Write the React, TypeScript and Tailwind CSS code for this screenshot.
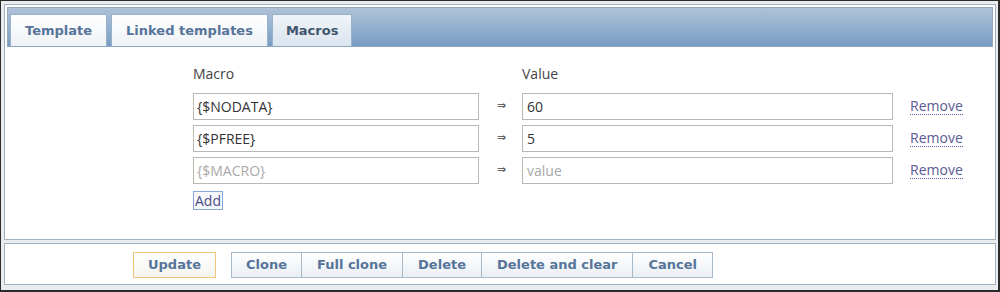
const macros = [
  { name: "{$NODATA}", value: "60" },
  { name: "{$PFREE}", value: "5" },
  { name: "", value: "" },
];

const tabs = ["Template", "Linked templates", "Macros"];
const buttons = ["Clone", "Full clone", "Delete", "Delete and clear", "Cancel"];

export default function App() {
  return (
    <div className="flex h-[292px] w-[1000px] flex-col border-t border-l border-r-2 border-b-2 border-[#2b2b2b] bg-[#e9edf0] pt-[3px] pl-[3px] pr-[2px] pb-[5px] font-['DejaVu_Sans',sans-serif] text-[13px]">
      {/* form panel */}
      <div className="flex h-[236px] flex-col border border-[#9fb0c1] bg-white">
        <div className="m-[2px] mb-0 flex h-[40px] items-end gap-[4px] border border-[#8fa8c2] bg-gradient-to-b from-[#aec2d8] via-[#95b1ce] to-[#779cc3] pl-[2px]">
          {tabs.map((t) => (
            <div
              key={t}
              className={
                t === "Macros"
                  ? "flex h-[32px] items-center border border-b-0 border-[#98b2cc] bg-gradient-to-b from-[#f0f4f8] to-[#dbe4ee] px-[13px] font-bold text-[#3f566e]"
                  : "flex h-[32px] items-center border border-b-0 border-[#98b2cc] bg-gradient-to-b from-[#ffffff] to-[#eef2f6] px-[14px] font-bold text-[#56749a]"
              }
            >
              {t}
            </div>
          ))}
        </div>
        <div className="flex flex-col pt-[19px] pl-[188px] font-['Open_Sans',sans-serif] text-[14px]">
          <div className="flex leading-[16px] text-[#444]">
            <div className="w-[329px]">Macro</div>
            <div>Value</div>
          </div>
          <div className="mt-[11px] flex flex-col gap-[5px]">
            {macros.map((m, i) => (
              <div key={i} className="flex h-[27px] items-center">
                <div
                  className={
                    m.name
                      ? "flex h-[27px] w-[286px] items-center border border-[#b9b9b1] px-[3px] text-[#333]"
                      : "flex h-[27px] w-[286px] items-center border border-[#b9b9b1] px-[3px] text-[#a9a9a9]"
                  }
                >
                  {m.name || "{$MACRO}"}
                </div>
                <div className="w-[43px] pl-[18px] font-['DejaVu_Sans',sans-serif] text-[11px] text-[#444]">⇒</div>
                <div
                  className={
                    m.value
                      ? "flex h-[27px] w-[371px] items-center border border-[#b9b9b1] px-[4px] text-[#333]"
                      : "flex h-[27px] w-[371px] items-center border border-[#b9b9b1] px-[4px] text-[#a9a9a9]"
                  }
                >
                  {m.value || "value"}
                </div>
                <span className="ml-[17px] border-b border-dotted border-[#5d5d9a] leading-[16px] text-[#5a5a92]">
                  Remove
                </span>
              </div>
            ))}
          </div>
          <div className="mt-[7px] flex">
            <div className="flex h-[19px] items-center border border-[#86a6d6] bg-[#f6f8fb] px-[1px] text-[#4c4c8a]">
              Add
            </div>
          </div>
        </div>
      </div>

      {/* footer panel */}
      <div className="mt-[3px] flex h-[42px] items-start border border-[#9fb0c1] bg-white pt-[8px] pl-[128px]">
        <div className="flex h-[26px] items-center border border-[#f0c67d] bg-gradient-to-b from-[#ffffff] to-[#f4f3ee] px-[14px] font-bold text-[#56749a]">
          Update
        </div>
        <div className="ml-[15px] flex">
          {buttons.map((b, i) => (
            <div
              key={b}
              className={
                i === 0
                  ? "flex h-[26px] items-center border border-[#a8b9ca] bg-gradient-to-b from-[#ffffff] to-[#eaeff4] px-[14px] font-bold text-[#56749a]"
                  : "flex h-[26px] items-center border border-l-0 border-[#a8b9ca] bg-gradient-to-b from-[#ffffff] to-[#eaeff4] px-[15px] font-bold text-[#56749a]"
              }
            >
              {b}
            </div>
          ))}
        </div>
      </div>
    </div>
  );
}
